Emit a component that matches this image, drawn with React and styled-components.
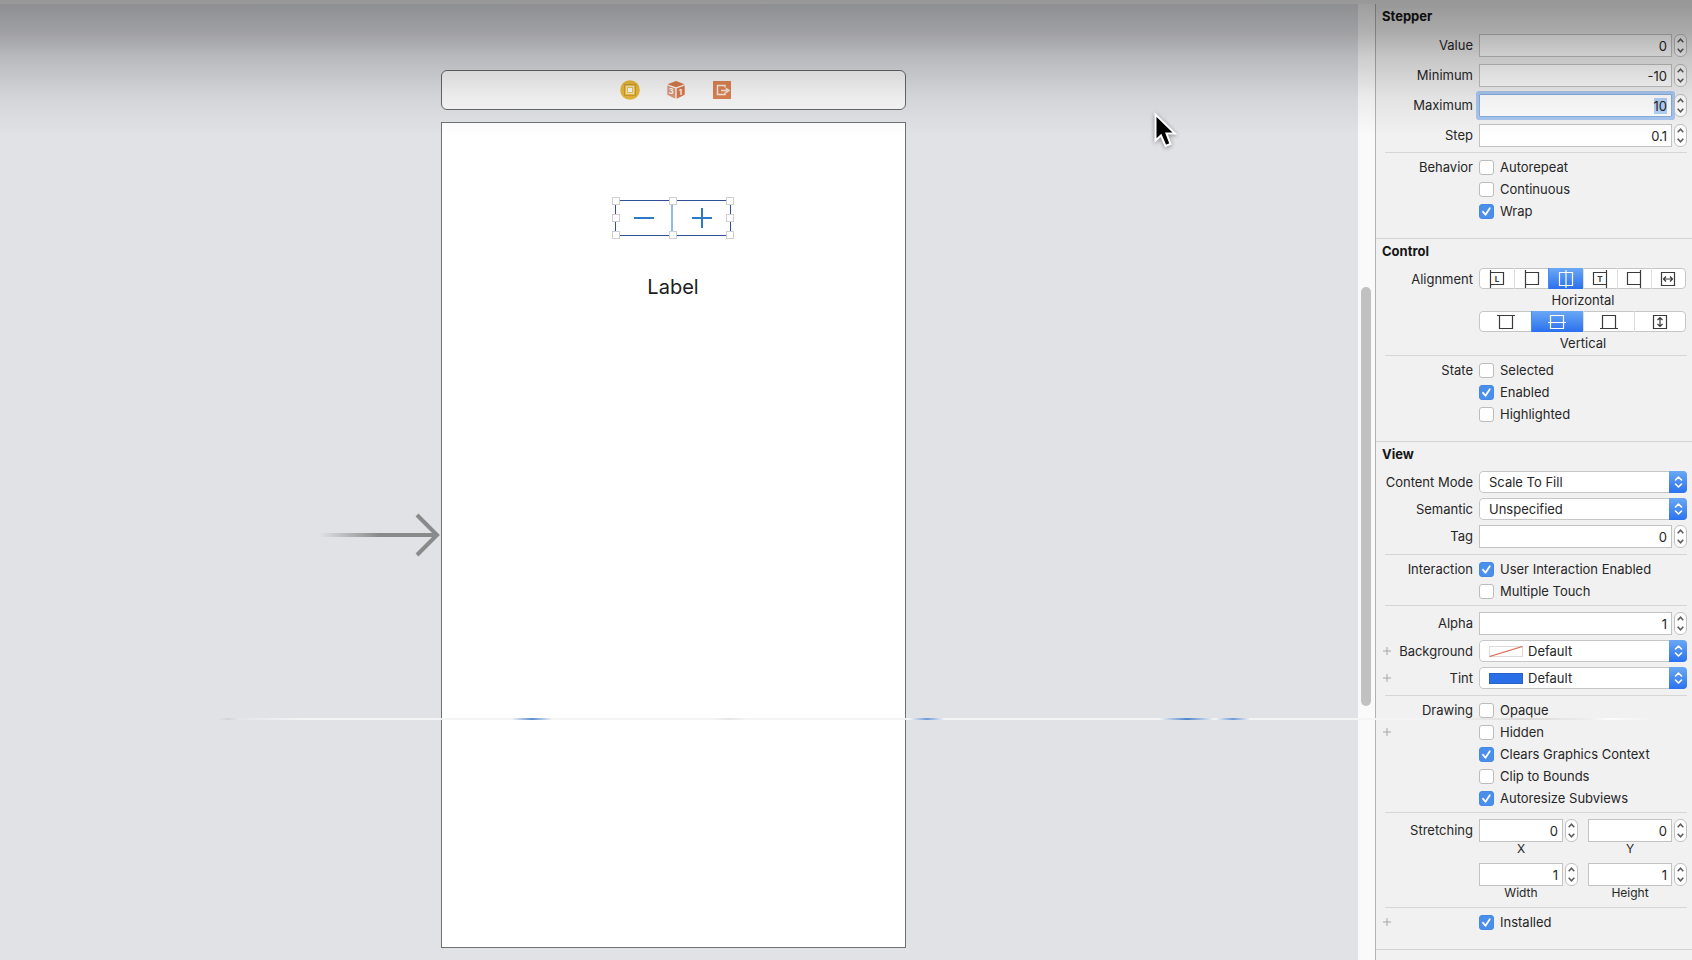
import React, { useEffect, useId, useRef, useState } from "react";
import styled, { createGlobalStyle, css } from "styled-components";

const GlobalStyle = createGlobalStyle`
  *, *::before, *::after { box-sizing: border-box; }
  body {
    margin: 0;
    background: #f1f1f1;
    color: #262626;
    font: 13px/17px Inter, "Liberation Sans", sans-serif;
  }
  button, input, select { font: inherit; color: inherit; margin: 0; }
  svg { display: block; }
`;

const Window = styled.div`
  position: relative;
  display: flex;
  flex-direction: column;
  min-height: 100vh;
  overflow: hidden;
`;

const TitleEdge = styled.div`
  height: 4px;
  background: #f4f4f4;
`;

const Workspace = styled.div`
  flex: 1;
  display: flex;
`;

const Shade = styled.div`
  position: absolute;
  inset: 0 0 auto 0;
  height: 136px;
  pointer-events: none;
  background: linear-gradient(
    rgba(0, 0, 0, 0.38),
    rgba(0, 0, 0, 0.29) 24%,
    rgba(0, 0, 0, 0.18) 42%,
    rgba(0, 0, 0, 0.06) 72%,
    rgba(0, 0, 0, 0)
  );
`;

const Streak = styled.div`
  position: absolute;
  top: 718px;
  left: 0;
  right: 0;
  height: 2px;
  pointer-events: none;
  background:
    linear-gradient(90deg, transparent, #5b8fd0, transparent) 512px 0 / 40px 2px no-repeat,
    linear-gradient(90deg, transparent, #6f9ad6, transparent) 910px 0 / 34px 2px no-repeat,
    linear-gradient(90deg, transparent, #4f85cc, transparent) 1160px 0 / 54px 2px no-repeat,
    linear-gradient(90deg, transparent, #6f9ad6, transparent) 1216px 0 / 34px 2px no-repeat,
    linear-gradient(90deg, transparent, #d3d4d6, transparent) 218px 0 / 20px 2px no-repeat,
    linear-gradient(90deg, transparent, #e6e6e6, transparent) 713px 0 / 34px 2px no-repeat,
    linear-gradient(90deg, transparent, #dcd8d8, transparent) 1450px 0 / 150px 2px no-repeat,
    linear-gradient(90deg, transparent 230px, #f4f4f5 300px, #f4f4f5 1440px, transparent 1460px, transparent 1590px, #fdfdfd 1610px, transparent 1650px);
`;

const Pointer = styled.svg`
  position: absolute;
  left: 1150px;
  top: 108px;
  pointer-events: none;
  filter: drop-shadow(0 1px 2px rgba(0, 0, 0, 0.4));
`;

/* Canvas */

const Canvas = styled.main`
  flex: 1;
  display: grid;
  grid-template-columns: 1fr auto 1fr;
  grid-template-rows: auto auto 1fr;
  row-gap: 12px;
  padding: 66px 11px 0 0;
  background: #e1e2e6;
`;

const Dock = styled.div`
  grid-column: 2;
  display: flex;
  align-items: center;
  justify-content: center;
  gap: 26px;
  height: 40px;
  padding-left: 4px;
  border: 1px solid #68696a;
  border-radius: 6px;
  background: #fafbfa;
`;

const DockButton = styled.button`
  display: grid;
  place-items: center;
  width: 20px;
  height: 20px;
  padding: 0;
  border: 0;
  background: none;
`;

const EntryArrow = styled.svg`
  grid-column: 1;
  grid-row: 2;
  place-self: center end;
  margin-right: 1px;
`;

const Phone = styled.section`
  grid-column: 2;
  grid-row: 2;
  display: flex;
  flex-direction: column;
  align-items: center;
  gap: 38px;
  width: 465px;
  min-height: 826px;
  padding: 77px 1px 0 0;
  border: 1px solid #707173;
  background: #fff;
`;

const SceneStepper = styled.div`
  position: relative;
  display: grid;
  grid-template-columns: 1fr 1fr;
  width: 116px;
  height: 36px;
  border: 1px solid #2f4f97;
`;

const SceneStep = styled.button`
  display: grid;
  place-items: center;
  padding: 0;
  border: 0;
  background: none;
  color: #2e78c8;
  &:first-child { border-right: 2px solid #8fbcf0; }
`;

const Handle = styled.span`
  position: absolute;
  left: ${(p) => p.$x};
  top: ${(p) => p.$y};
  width: 8px;
  height: 8px;
  margin: -4px;
  border: 1px solid #cfcfd3;
  background: #fff;
`;

const SceneLabel = styled.span`
  font-size: 20px;
  line-height: 26px;
  color: #1c1c1c;
`;

const ScrollTrack = styled.div`
  display: grid;
  grid-template-rows: 283fr 419fr 254fr;
  width: 17px;
  padding: 0 3px;
  background: #fafafa;
`;

const ScrollThumb = styled.div`
  grid-row: 2;
  border-radius: 5px;
  margin-right: 1px;
  background: #c1c1c1;
`;

/* Inspector */

const Inspector = styled.aside`
  width: 317px;
  border-left: 1px solid #b2b2b2;
  background: #f1f1f1;
`;

const Section = styled.section`
  padding: 4px 5px 16px 6px;
  & + & { border-top: 1px solid #d2d2d2; }
  &:last-child { border-bottom: 1px solid #d2d2d2; }
`;

const Heading = styled.h2`
  margin: 0 0 2px;
  font-size: 13px;
  line-height: 17px;
  font-weight: 700;
  color: #161616;
`;

const Group = styled.div`
  display: flex;
  flex-direction: column;
  gap: ${(p) => p.$gap || 0}px;
  padding: ${(p) => p.$pad || "6px 0"};
`;

const Divider = styled.hr`
  height: 1px;
  margin: 0 0 0 3px;
  border: 0;
  background: #d6d6d6;
`;

const Row = styled.div`
  display: grid;
  grid-template-columns: 91px 1fr;
  column-gap: 6px;
  align-items: ${(p) => p.$align || "center"};
`;

const RowTitle = styled.div`
  display: flex;
  align-items: center;
  justify-content: space-between;
  min-height: 22px;
`;

const RowLabel = styled.label`
  margin-left: auto;
  white-space: nowrap;
`;

const AddButton = styled.button`
  display: grid;
  place-items: center;
  width: 10px;
  height: 10px;
  padding: 0;
  border: 0;
  background: none;
  color: #a6a6a6;
`;

const FieldBox = styled.div`
  display: grid;
  grid-template-columns: 1fr 13px;
  column-gap: 2px;
`;

const TextInput = styled.input`
  width: 100%;
  min-width: 0;
  height: 23px;
  padding: 2px 4px;
  border: 1px solid #c3c3c3;
  border-radius: 0;
  background: #fff;
  text-align: right;
  line-height: 17px;
  outline: none;
  &:focus {
    border-color: #86aee0;
    box-shadow: 0 0 0 3px #a9c8f0;
    border-radius: 1px;
  }
  &::selection { background: #b3d1fa; color: #262626; }
`;

const Nudger = styled.div`
  display: grid;
  grid-template-rows: 1fr 1fr;
  height: 23px;
  border: 1px solid #c2c2c2;
  border-radius: 6px;
  background: #fff;
`;

const NudgeButton = styled.button`
  display: grid;
  place-items: center;
  padding: 0;
  border: 0;
  background: none;
  color: #5a5a5a;
`;

const Caption = styled.label`
  grid-column: 1;
  text-align: center;
  font-size: 12px;
  line-height: 14px;
`;

const Pair = styled.div`
  display: grid;
  grid-template-columns: 1fr 1fr;
  column-gap: 10px;
`;

const CheckLabel = styled.label`
  display: flex;
  align-items: center;
  gap: 6px;
  height: 22px;
  white-space: nowrap;
`;

const checkedBox = css`
  &:checked {
    border-color: #4488e8;
    background: #4a90ea url("data:image/svg+xml,%3Csvg xmlns='http://www.w3.org/2000/svg' viewBox='0 0 13 13'%3E%3Cpath d='M3 6.8l2.5 2.9L9.8 3.3' fill='none' stroke='white' stroke-width='1.8' stroke-linecap='round' stroke-linejoin='round'/%3E%3C/svg%3E") center / 13px 13px no-repeat;
  }
`;

const CheckInput = styled.input`
  appearance: none;
  width: 15px;
  height: 15px;
  border: 1px solid #bcbcbc;
  border-radius: 3px;
  background: #fff;
  ${checkedBox}
`;

const SelectBox = styled.div`
  display: grid;
  grid-template-columns: 10px 34px 1fr 18px;
  align-items: center;
  height: 22px;
  border-radius: 4px;
  overflow: hidden;
`;

const Select = styled.select`
  grid-area: 1 / 1 / 2 / 5;
  appearance: none;
  width: 100%;
  height: 22px;
  padding: 0 20px 0 ${(p) => (p.$swatch ? 48 : 9)}px;
  border: 1px solid #c6c6c6;
  border-radius: 4px;
  background: #fff;
`;

const SelectCap = styled.span`
  grid-area: 1 / 4;
  display: grid;
  place-items: center;
  height: 22px;
  pointer-events: none;
  background: linear-gradient(#6aa8f4, #2b72ee);
  color: #fff;
`;

const Swatch = styled.svg`
  grid-area: 1 / 2;
  pointer-events: none;
`;

const Segments = styled.div`
  display: grid;
  grid-auto-flow: column;
  grid-auto-columns: 1fr;
  height: 21px;
  margin-right: 1px;
  border: 1px solid #c6c6c6;
  border-radius: 4px;
  background: #fff;
`;

const Segment = styled.label`
  display: grid;
  place-items: center;
  margin: -1px 0;
  color: #3a3a3a;
  & + & { border-left: 1px solid #dedede; }
  &:has(input:checked) {
    border-color: #4a8df0;
    background: linear-gradient(#6ba8f5, #2a70ee);
    color: #fff;
  }
`;

const HiddenRadio = styled.input`
  grid-area: 1 / 1;
  appearance: none;
  width: 1px;
  height: 1px;
  outline: none;
`;

const SegmentIcon = styled.svg`
  grid-area: 1 / 1;
`;

const SegmentCaption = styled.div`
  text-align: center;
  line-height: 22px;
`;

function Title({ htmlFor, addable, children }) {
  return (
    <RowTitle>
      {addable && (
        <AddButton type="button" aria-label={`Add variation ${children || ""}`}>
          <svg width="10" height="10" stroke="currentColor"><path d="M5 1v8M1 5h8" /></svg>
        </AddButton>
      )}
      {children && <RowLabel as={htmlFor ? "label" : "span"} htmlFor={htmlFor}>{children}</RowLabel>}
    </RowTitle>
  );
}

function NumberField({ id, value, name, focused, caption }) {
  const [text, setText] = useState(value);
  const ref = useRef(null);
  useEffect(() => {
    if (focused) {
      ref.current.focus();
      ref.current.select();
    }
  }, [focused]);
  const nudge = (d) => setText(String((Number(text) || 0) + d));
  return (
    <FieldBox>
      <TextInput id={id} ref={ref} inputMode="decimal" value={text} onChange={(e) => setText(e.target.value)} />
      <Nudger>
        <NudgeButton type="button" aria-label={`Increase ${name}`} onClick={() => nudge(1)}>
          <svg width="7" height="5" fill="none" stroke="currentColor" strokeWidth="1.5"><path d="M.7 4.2L3.5 1.2l2.8 3" /></svg>
        </NudgeButton>
        <NudgeButton type="button" aria-label={`Decrease ${name}`} onClick={() => nudge(-1)}>
          <svg width="7" height="5" fill="none" stroke="currentColor" strokeWidth="1.5"><path d="M.7.8l2.8 3 2.8-3" /></svg>
        </NudgeButton>
      </Nudger>
      {caption && <Caption htmlFor={id}>{caption}</Caption>}
    </FieldBox>
  );
}

function FieldRow({ label, ...rest }) {
  const id = useId();
  return (
    <Row>
      <Title htmlFor={id}>{label}</Title>
      <NumberField id={id} name={label} {...rest} />
    </Row>
  );
}

function CaptionedField(props) {
  const id = useId();
  return <NumberField id={id} name={props.caption} {...props} />;
}

function CheckRow({ title, addable, label, checked }) {
  return (
    <Row>
      <Title addable={addable}>{title}</Title>
      <CheckLabel>
        <CheckInput type="checkbox" defaultChecked={checked} />
        {label}
      </CheckLabel>
    </Row>
  );
}

function SelectRow({ label, value, addable, swatch }) {
  const id = useId();
  return (
    <Row>
      <Title htmlFor={id} addable={addable}>{label}</Title>
      <SelectBox>
        <Select id={id} $swatch={Boolean(swatch)}><option>{value}</option></Select>
        {swatch === "none" && (
          <Swatch width="34" height="11">
            <rect x=".5" y=".5" width="33" height="10" fill="#fff" stroke="#dcdcdc" />
            <path d="M.5 10.5L33.500 .5" stroke="#d9705c" strokeWidth="1.3" />
          </Swatch>
        )}
        {swatch === "blue" && (
          <Swatch width="34" height="11"><rect x=".5" y=".5" width="33" height="10" fill="#2b6fe8" stroke="#2a63c8" /></Swatch>
        )}
        <SelectCap>
          <svg width="9" height="14" fill="none" stroke="currentColor" strokeWidth="1.6" strokeLinecap="round" strokeLinejoin="round">
            <path d="M1.500 5L4.500 2l3 3M1.500 9l3 3 3-3" />
          </svg>
        </SelectCap>
      </SelectBox>
    </Row>
  );
}

const iconShapes = {
  leading: <><path d="M2.500 0v18M2.500 2.500h13v12h-13" /><text x="9" y="12" fontSize="8" fontWeight="700" textAnchor="middle" stroke="none" fill="currentColor">L</text></>,
  left: <path d="M2.500 0v18M2.500 2.500h13v12h-13" />,
  center: <path d="M2.500 2.500h13v13h-13zM9 0v18" />,
  trailing: <><path d="M15.500 0v18M15.500 2.500h-13v12h13" /><text x="9" y="12" fontSize="8" fontWeight="700" textAnchor="middle" stroke="none" fill="currentColor">T</text></>,
  right: <path d="M15.500 0v18M15.500 2.500h-13v12h13" />,
  fill: <path d="M2.500 2.500h13v13h-13zM4.500 9h9M7 6.500L4.500 9L7 11.500M11 6.500L13.500 9L11 11.500" />,
  top: <path d="M0 2.500h18M2.500 2.500v13h13v-13" />,
  middle: <path d="M2.500 2.500h13v13h-13zM0 9.500h18" />,
  bottom: <path d="M0 15.500h18M2.500 15.500v-13h13v13" />,
  stretch: <path d="M2.500 2.500h13v13h-13zM9 4.500v9M6.500 7L9 4.500L11.500 7M6.500 11L9 13.500L11.500 11" />,
};

function SegmentPicker({ name, options, selected }) {
  return (
    <Segments role="radiogroup" aria-label={name}>
      {options.map((key) => (
        <Segment key={key}>
          <HiddenRadio type="radio" name={name} aria-label={key} defaultChecked={key === selected} />
          <SegmentIcon width="18" height="18" fill="none" stroke="currentColor" strokeWidth="1.2">{iconShapes[key]}</SegmentIcon>
        </Segment>
      ))}
    </Segments>
  );
}

const handles = [
  ["0%", "0%"], ["50%", "0%"], ["100%", "0%"],
  ["0%", "50%"], ["100%", "50%"],
  ["0%", "100%"], ["50%", "100%"], ["100%", "100%"],
];

export default function App() {
  return (
    <>
      <GlobalStyle />
      <Window>
        <TitleEdge />
        <Workspace>
          <Canvas>
            <Dock>
              <DockButton type="button" aria-label="View Controller">
                <svg width="20" height="20">
                  <circle cx="10" cy="10" r="9.800" fill="#edbb3a" />
                  <rect x="4.500" y="4.500" width="11" height="11" fill="none" stroke="#cf9f2e" />
                  <rect x="6.500" y="6.500" width="7" height="7" fill="none" stroke="#fbeaae" strokeWidth="1.400" />
                  <rect x="8" y="8" width="4" height="4" fill="#fff" />
                </svg>
              </DockButton>
              <DockButton type="button" aria-label="First Responder">
                <svg width="20" height="20">
                  <path d="M10 1L18.500 4.200L10 7.200L1.500 4.200z" fill="#dd7a4a" />
                  <path d="M1.300 5.600L9.300 8.400V18.800L1.300 14.800z" fill="#e09a78" />
                  <path d="M18.700 5.600L10.700 8.400V18.800L18.700 14.800z" fill="#dd7a4a" />
                  <text x="5" y="14" fontSize="8" fontWeight="700" textAnchor="middle" fill="#fff">3</text>
                  <text x="14.500" y="15" fontSize="8" fontWeight="700" textAnchor="middle" fill="#fff">1</text>
                </svg>
              </DockButton>
              <DockButton type="button" aria-label="Exit">
                <svg width="18" height="18">
                  <rect width="18" height="18" fill="#e08454" />
                  <path d="M12 6.500V4.500H4.500v9H12v-2M8 9.500h6.500M12.800 7.300L16 9.500L12.800 11.700" fill="none" stroke="#fdeee4" strokeWidth="1.500" />
                </svg>
              </DockButton>
            </Dock>
            <EntryArrow width="121" height="44" fill="none">
              <defs>
                <linearGradient id="fade" gradientUnits="userSpaceOnUse" x1="0" y1="0" x2="60" y2="0">
                  <stop stopColor="#898a8a" stopOpacity="0" />
                  <stop offset="1" stopColor="#898a8a" />
                </linearGradient>
              </defs>
              <rect y="20" width="117" height="4" fill="url(#fade)" />
              <path d="M98 2L118 22L98 42" stroke="#898a8a" strokeWidth="4" />
            </EntryArrow>
            <Phone>
              <SceneStepper>
                <SceneStep type="button" aria-label="Decrement">
                  <svg width="20" height="20" stroke="currentColor" strokeWidth="2"><path d="M0 10h20" /></svg>
                </SceneStep>
                <SceneStep type="button" aria-label="Increment">
                  <svg width="20" height="20" stroke="currentColor" strokeWidth="2"><path d="M0 10h20M10 0v20" /></svg>
                </SceneStep>
                {handles.map(([x, y]) => <Handle key={x + y} $x={x} $y={y} />)}
              </SceneStepper>
              <SceneLabel>Label</SceneLabel>
            </Phone>
          </Canvas>
          <ScrollTrack><ScrollThumb /></ScrollTrack>
          <Inspector>
            <Section>
              <Heading>Stepper</Heading>
              <Group $gap={7} $pad="7px 0 5px">
                <FieldRow label="Value" value="0" />
                <FieldRow label="Minimum" value="-10" />
                <FieldRow label="Maximum" value="10" focused />
                <FieldRow label="Step" value="0.1" />
              </Group>
              <Divider />
              <Group $pad="3px 0 0">
                <CheckRow title="Behavior" label="Autorepeat" />
                <CheckRow label="Continuous" />
                <CheckRow label="Wrap" checked />
              </Group>
            </Section>
            <Section>
              <Heading>Control</Heading>
              <Group $pad="6px 0 1px">
                <Row $align="start">
                  <Title>Alignment</Title>
                  <div>
                    <SegmentPicker name="Horizontal" options={["leading", "left", "center", "trailing", "right", "fill"]} selected="center" />
                    <SegmentCaption>Horizontal</SegmentCaption>
                    <SegmentPicker name="Vertical" options={["top", "middle", "bottom", "stretch"]} selected="middle" />
                    <SegmentCaption>Vertical</SegmentCaption>
                  </div>
                </Row>
              </Group>
              <Divider />
              <Group $pad="3px 0 0">
                <CheckRow title="State" label="Selected" />
                <CheckRow label="Enabled" checked />
                <CheckRow label="Highlighted" />
              </Group>
            </Section>
            <Section>
              <Heading>View</Heading>
              <Group $gap={5}>
                <SelectRow label="Content Mode" value="Scale To Fill" />
                <SelectRow label="Semantic" value="Unspecified" />
                <FieldRow label="Tag" value="0" />
              </Group>
              <Divider />
              <Group $pad="3px 0">
                <CheckRow title="Interaction" label="User Interaction Enabled" checked />
                <CheckRow label="Multiple Touch" />
              </Group>
              <Divider />
              <Group $gap={5}>
                <FieldRow label="Alpha" value="1" />
                <SelectRow label="Background" value="Default" addable swatch="none" />
                <SelectRow label="Tint" value="Default" addable swatch="blue" />
              </Group>
              <Divider />
              <Group $pad="3px 0">
                <CheckRow title="Drawing" label="Opaque" />
                <CheckRow addable label="Hidden" />
                <CheckRow label="Clears Graphics Context" checked />
                <CheckRow label="Clip to Bounds" />
                <CheckRow label="Autoresize Subviews" checked />
              </Group>
              <Divider />
              <Group $gap={7} $pad="6px 0 7px">
                <Row $align="start">
                  <Title>Stretching</Title>
                  <Pair>
                    <CaptionedField caption="X" value="0" />
                    <CaptionedField caption="Y" value="0" />
                  </Pair>
                </Row>
                <Row $align="start">
                  <Title />
                  <Pair>
                    <CaptionedField caption="Width" value="1" />
                    <CaptionedField caption="Height" value="1" />
                  </Pair>
                </Row>
              </Group>
              <Divider />
              <Group $pad="3px 0 0">
                <CheckRow addable label="Installed" checked />
              </Group>
            </Section>
          </Inspector>
        </Workspace>
        <Streak />
        <Shade />
        <Pointer width="34" height="46">
          <path d="M5.500 6.500V32.500L11 27.500L15.500 38L20.500 36L16.500 25.500H25z" fill="#000" stroke="#fff" strokeWidth="2" strokeLinejoin="miter" />
        </Pointer>
      </Window>
    </>
  );
}
